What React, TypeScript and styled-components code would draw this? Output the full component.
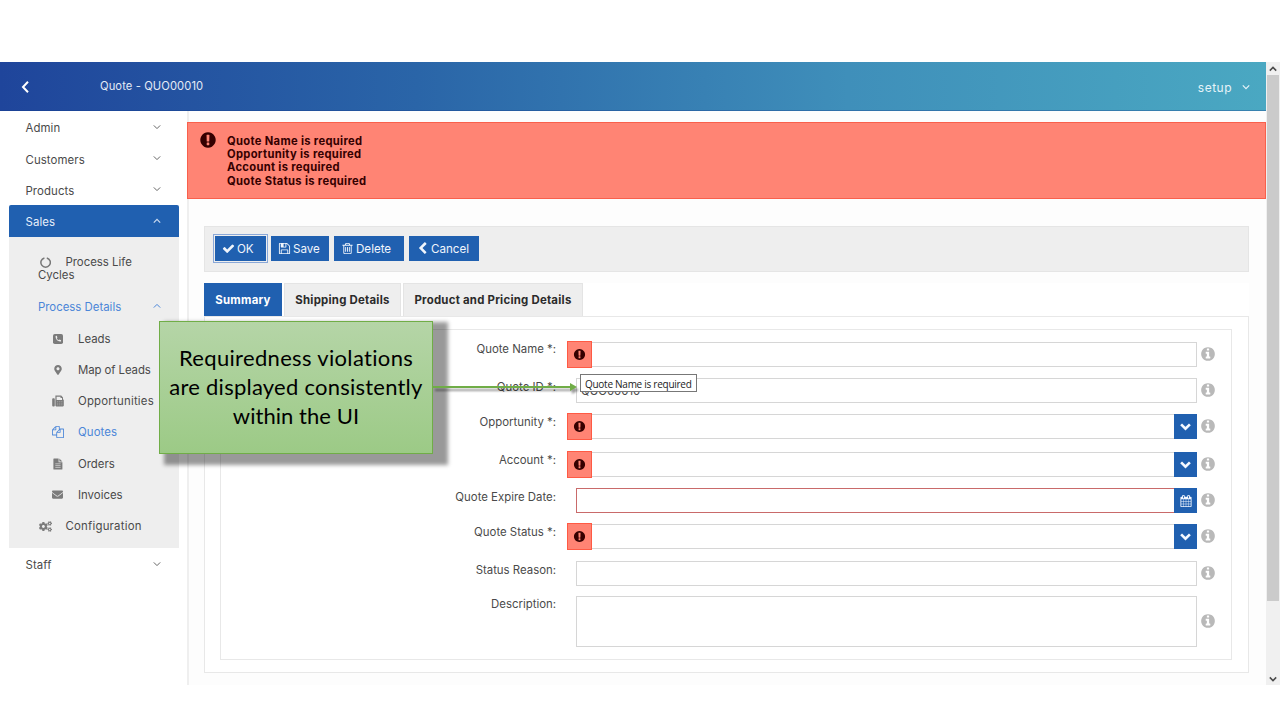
import React from "react";
import styled, { createGlobalStyle } from "styled-components";
import { FaMapMarkerAlt, FaEnvelope, FaCogs } from "react-icons/fa";

const Global = createGlobalStyle`
  * { box-sizing: border-box; }
  body { margin: 0; background: #fff; font-family: Inter, "Liberation Sans", sans-serif; font-size: 11.4px; color: #4a4a4a; }
  button { font: inherit; border: 0; margin: 0; padding: 0; }
  svg { display: block; flex: none; }
`;

const paths = {
  save: "M512 1536h768v-384h-768v384zm896 0h128v-896q0-14-10-38.5t-20-34.5l-281-281q-10-10-34-20t-39-10v416q0 40-28 68t-68 28h-576q-40 0-68-28t-28-68v-416h-128v1280h128v-416q0-40 28-68t68-28h832q40 0 68 28t28 68v416zm-384-928v-320q0-13-9.5-22.5t-22.5-9.5h-192q-13 0-22.5 9.5t-9.5 22.5v320q0 13 9.5 22.5t22.5 9.5h192q13 0 22.5-9.5t9.5-22.5zm640 32v928q0 40-28 68t-68 28h-1344q-40 0-68-28t-28-68v-1344q0-40 28-68t68-28h928q40 0 88 20t76 48l280 280q28 28 48 76t20 88z",
  trash: "M704 736v576q0 14-9 23t-23 9h-64q-14 0-23-9t-9-23v-576q0-14 9-23t23-9h64q14 0 23 9t9 23zm256 0v576q0 14-9 23t-23 9h-64q-14 0-23-9t-9-23v-576q0-14 9-23t23-9h64q14 0 23 9t9 23zm256 0v576q0 14-9 23t-23 9h-64q-14 0-23-9t-9-23v-576q0-14 9-23t23-9h64q14 0 23 9t9 23zm128 724v-948h-896v948q0 22 7 40.5t14.5 27 10.5 8.5h832q3 0 10.5-8.5t14.5-27 7-40.5zm-672-1076h448l-48-117q-7-9-17-11h-317q-10 2-17 11zm928 32v64q0 14-9 23t-23 9h-96v948q0 83-47 143.5t-113 60.5h-832q-66 0-113-58.5t-47-141.5v-952h-96q-14 0-23-9t-9-23v-64q0-14 9-23t23-9h309l70-167q15-37 54-63t79-26h320q40 0 79 26t54 63l70 167h309q14 0 23 9t9 23z",
  check: "M1671 566q0 40-28 68l-724 724-136 136q-28 28-68 28t-68-28l-136-136-362-362q-28-28-28-68t28-68l136-136q28-28 68-28t68 28l294 295 656-657q28-28 68-28t68 28l136 136q28 28 28 68z",
  left: "M1427 301l-531 531 531 531q19 19 19 45t-19 45l-166 166q-19 19-45 19t-45-19l-742-742q-19-19-19-45t19-45l742-742q19-19 45-19t45 19l166 166q19 19 19 45t-19 45z",
  alert: "M896 128q209 0 385.5 103t279.5 279.5 103 385.5-103 385.5-279.5 279.5-385.5 103-385.5-103-279.5-279.5-103-385.5 103-385.5 279.5-279.5 385.5-103zm128 1247v-190q0-14-9-23.500t-22-9.500h-192q-13 0-23 10t-10 23v190q0 13 10 23t23 10h192q13 0 22-9.500t9-23.500zm-2-344l18-621q0-12-10-18-10-8-24-8h-220q-14 0-24 8-10 6-10 18l17 621q0 10 10 17.500t24 7.500h185q14 0 23.500-7.500t10.500-17.500z",
  info: "M1152 1376v-160q0-14-9-23t-23-9h-96v-512q0-14-9-23t-23-9h-320q-14 0-23 9t-9 23v160q0 14 9 23t23 9h96v320h-96q-14 0-23 9t-9 23v160q0 14 9 23t23 9h448q14 0 23-9t9-23zm-128-896v-160q0-14-9-23t-23-9h-192q-14 0-23 9t-9 23v160q0 14 9 23t23 9h192q14 0 23-9t9-23zm640 416q0 209-103 385.5t-279.5 279.5-385.5 103-385.5-103-279.5-279.5-103-385.5 103-385.5 279.5-279.5 385.5-103 385.5 103 279.5 279.5 103 385.5z",
  copy: "M1696 384q40 0 68 28t28 68v1216q0 40-28 68t-68 28h-960q-40 0-68-28t-28-68v-288h-544q-40 0-68-28t-28-68v-672q0-40 20-88t48-76l408-408q28-28 76-48t88-20h416q40 0 68 28t28 68v328q68-40 128-40h416zm-544 213l-299 299h299v-299zm-640-384l-299 299h299v-299zm196 647l316-316v-416h-384v416q0 40-28 68t-68 28h-416v640h512v-256q0-40 20-88t48-76zm956 804v-1152h-384v416q0 40-28 68t-68 28h-416v640h896z",
  calendar: "M192 1664h288v-288h-288v288zm352 0h320v-288h-320v288zm-352-352h288v-320h-288v320zm352 0h320v-320h-320v320zm-352-384h288v-288h-288v288zm736 736h320v-288h-320v288zm-384-736h320v-288h-320v288zm768 736h288v-288h-288v288zm-384-352h320v-320h-320v320zm-352-864v-288q0-13-9.5-22.5t-22.5-9.5h-64q-13 0-22.5 9.5t-9.5 22.5v288q0 13 9.5 22.5t22.5 9.5h64q13 0 22.5-9.5t9.5-22.5zm736 864h288v-320h-288v320zm-384-384h320v-288h-320v288zm384 0h288v-288h-288v288zm32-480v-288q0-13-9.5-22.5t-22.5-9.5h-64q-13 0-22.5 9.5t-9.5 22.5v288q0 13 9.5 22.5t22.5 9.5h64q13 0 22.5-9.5t9.5-22.5zm384-64v1280q0 52-38 90t-90 38h-1408q-52 0-90-38t-38-90v-1280q0-52 38-90t90-38h128v-96q0-66 47-113t113-47h64q66 0 113 47t47 113v96h384v-96q0-66 47-113t113-47h64q66 0 113 47t47 113v96h128q52 0 90 38t38 90z",
};

const Glyph = ({ name, size }: { name: keyof typeof paths; size: number }) => (
  <svg width={size} height={size} viewBox="0 0 1792 1792" fill="currentColor"><path d={paths[name]} /></svg>
);

const Chevron = ({ up = false, size = 8, weight = 1 }: { up?: boolean; size?: number; weight?: number }) => (
  <svg width={size} height={size} viewBox="0 0 8 8" fill="none" stroke="currentColor" strokeWidth={weight}>
    <path d={up ? "M0.8 5.6 L4 2.4 L7.2 5.6" : "M0.8 2.4 L4 5.6 L7.2 2.4"} />
  </svg>
);

const Back = () => (
  <svg width="14" height="14" viewBox="0 0 14 14" fill="none" stroke="currentColor" strokeWidth="2">
    <path d="M10 1.8 L5 7 L10 12.2" />
  </svg>
);

const Notch = () => (
  <svg width="11" height="11" viewBox="0 0 11 11" fill="none" stroke="#777" strokeWidth="1.5">
    <path d="M4.4 0.9 A4.7 4.7 0 1 0 6.8 0.9" />
  </svg>
);

const Phone = () => (
  <svg width="10" height="10" viewBox="0 0 10 10">
    <rect width="10" height="10" rx="1.8" fill="currentColor" />
    <path d="M2.6 2.1 C2.3 5.2 4.9 7.9 7.9 7.4 L8.1 6.2 L6.5 5.5 L5.8 6.2 Q4.3 5.5 3.8 4.2 L4.4 3.5 L3.8 1.8 Z" fill="#eee" />
  </svg>
);

const Fax = () => (
  <svg width="12" height="12" viewBox="0 0 12 12" fill="currentColor">
    <rect x="0.2" y="3.2" width="2.6" height="8.3" rx="0.9" />
    <path fillRule="evenodd" d="M3.4 0.6 H9.2 L11 2.4 V4.3 L11.8 5 V10.7 L11 11.5 H4.2 L3.4 10.7 Z M4.6 1.7 V5 H10 V3.1 H8.5 V1.7 Z" />
    <path d="M5 6.6h5.4M5 8.2h5.4M5 9.8h5.4" stroke="#a5a5a5" strokeWidth="0.8" strokeDasharray="1.2 0.9" />
  </svg>
);

const FileText = () => (
  <svg width="10" height="12" viewBox="0 0 10 12" fill="currentColor">
    <path d="M0.9 0.5 H5.6 V4.2 H9.4 V10.9 Q9.4 11.5 8.8 11.5 H0.9 Q0.4 11.5 0.4 10.9 V1.1 Q0.4 0.5 0.9 0.5 Z" />
    <path d="M6.4 0.6 L9.3 3.5 H6.4 Z" />
    <path d="M2.3 5.8h5.3M2.3 7.6h5.3M2.3 9.4h5.3" stroke="#d0d0d0" strokeWidth="0.8" />
  </svg>
);

const Page = styled.div`
  position: relative;
  width: 1280px;
  height: 720px;
  padding-top: 62px;
  overflow: hidden;
  background: #fff;
`;
const Window = styled.div`
  display: flex;
  height: 623px;
`;
const AppArea = styled.div`
  width: 1266px;
  display: flex;
  flex-direction: column;
`;
const Header = styled.header`
  height: 49px;
  flex: none;
  display: flex;
  align-items: center;
  background: linear-gradient(90deg, #1f459b 0%, #2a65a8 33%, #3f8fba 67%, #4aa8c2 100%);
  border-bottom: 1px solid rgba(20, 60, 140, 0.35);
  color: #fff;
  padding: 2px 16px 0 18px;
`;
const Title = styled.div`
  margin-left: 68px;
  padding-bottom: 3px;
  font-size: 11.2px;
  letter-spacing: 0.1px;
  color: #e4ebf6;
`;
const User = styled.div`
  margin-left: auto;
  display: flex;
  align-items: center;
  gap: 10px;
  font-size: 12px;
  letter-spacing: 0.5px;
  color: #e6f3f8;
`;
const Body = styled.div`
  flex: 1;
  min-height: 0;
  display: flex;
`;
const Sidebar = styled.nav`
  width: 187px;
  flex: none;
  padding: 0 8px 0 9px;
`;
const Section = styled.div<{ $active?: boolean }>`
  height: 31.4px;
  display: flex;
  align-items: center;
  justify-content: space-between;
  padding: 3px 18px 0 16.5px;
  letter-spacing: 0.1px;
  border-radius: 2px 2px 0 0;
  background: ${(p) => (p.$active ? "#2060b0" : "transparent")};
  color: ${(p) => (p.$active ? "#e8effa" : "#4a4a4a")};
  svg { margin-bottom: 3px; opacity: 0.85; }
`;
const SubMenu = styled.div`
  height: 311.5px;
  background: #eee;
  padding-top: 19px;
  margin-bottom: 0;
`;
const Cycles = styled.div`
  height: 36px;
  padding-left: 29px;
  line-height: 13.5px;
`;
const CyclesFirst = styled.div`
  display: flex;
  align-items: center;
  gap: 14.5px;
  padding-left: 2px;
`;
const SubHead = styled.div`
  height: 31.3px;
  display: flex;
  align-items: center;
  justify-content: space-between;
  padding: 0 18px 0 29px;
  color: #4b86d8;
  svg { margin-bottom: 3px; }
`;
const SubItem = styled.div<{ $level?: number; $on?: boolean; $track?: number }>`
  height: 31.3px;
  display: flex;
  align-items: center;
  white-space: nowrap;
  letter-spacing: ${(p) => p.$track ?? 0}px;
  padding-left: ${(p) => (p.$level === 1 ? 29.5 : 42)}px;
  color: ${(p) => (p.$on ? "#4b86d8" : "#4a4a4a")};
`;
const ItemIcon = styled.span<{ $on?: boolean }>`
  width: 13px;
  margin-right: 14px;
  display: flex;
  justify-content: center;
  color: ${(p) => (p.$on ? "#4b86d8" : "#7b7b7b")};
`;
const Content = styled.main`
  flex: 1;
  min-width: 0;
  background: #fdfdfd;
  border-left: 2px solid #efefef;
`;
const Alert = styled.div`
  margin: 11px 0 0 -2px;
  height: 77px;
  display: flex;
  background: #ff8474;
  border: 1px solid #f9604c;
  padding: 8px 11px;
  color: #350000;
`;
const AlertList = styled.div`
  margin: 3.5px 0 0 10px;
  font-size: 11.2px;
  letter-spacing: 0.32px;
  font-weight: 700;
  line-height: 13.4px;
`;
const Toolbar = styled.div`
  margin: 27px 17px 0 15px;
  height: 46px;
  display: flex;
  gap: 5px;
  padding: 9px 0 0 10px;
  background: #eee;
  border: 1px solid #e5e5e5;
`;
const Action = styled.button<{ $w: number; $focus?: boolean }>`
  width: ${(p) => p.$w}px;
  height: 25px;
  display: flex;
  align-items: center;
  gap: 2px;
  padding-left: 7px;
  color: #f0f5fc;
  background: #2060b0;
  outline: ${(p) => (p.$focus ? "1px solid #8aa8d8" : "none")};
  outline-offset: 1px;
  font-size: 11.6px;
`;
const Tabs = styled.div`
  display: flex;
  gap: 2px;
  margin: 11px 17px 0 15px;
  background: #fff;
`;
const Tab = styled.div<{ $w: number; $on?: boolean }>`
  width: ${(p) => p.$w}px;
  height: 33px;
  display: flex;
  align-items: center;
  justify-content: center;
  font-weight: 700;
  font-size: 11.4px;
  letter-spacing: 0.24px;
  color: ${(p) => (p.$on ? "#fff" : "#2b2b2b")};
  background: ${(p) => (p.$on ? "#2060b0" : "#eee")};
  border: 1px solid ${(p) => (p.$on ? "#2060b0" : "#e4e4e4")};
  border-bottom: 0;
`;
const Panel = styled.section`
  margin: 0 17px 0 15px;
  height: 357px;
  padding: 12px 16px 12px 15px;
  background: #fff;
  border: 1px solid #e8e8e8;
`;
const Fieldset = styled.div`
  height: 331px;
  padding-top: 12px;
  border: 1px solid #e8e8e8;
`;
const Row = styled.div<{ $h: number }>`
  height: ${(p) => p.$h}px;
  display: flex;
  align-items: flex-start;
`;
const Label = styled.label<{ $drop: number }>`
  width: 335px;
  margin-right: 20px;
  padding-top: ${(p) => p.$drop}px;
  line-height: 14px;
  text-align: right;
`;
const Control = styled.div<{ $h: number; $invalid?: boolean }>`
  position: relative;
  width: 621px;
  height: ${(p) => p.$h}px;
  display: flex;
  align-items: center;
  justify-content: space-between;
  padding-left: 4px;
  background: #fff;
  border: 1px solid ${(p) => (p.$invalid ? "#c96a6a" : "#d6d6d6")};
`;
const Picker = styled.button`
  width: 23px;
  height: 25px;
  margin: -1px -1px -1px auto;
  display: flex;
  align-items: center;
  justify-content: center;
  background: #2060b0;
  color: #f4f8ff;
`;
const ErrorBadge = styled.span`
  position: absolute;
  left: -10px;
  top: -2px;
  width: 25px;
  height: 27px;
  display: flex;
  align-items: center;
  justify-content: center;
  padding-bottom: 1px;
  background: #ff8474;
  border: 1px solid #ff5a44;
  color: #350000;
`;
const Help = styled.span<{ $h: number }>`
  height: ${(p) => p.$h}px;
  margin-left: 3px;
  display: flex;
  align-items: center;
  color: #b9b9b9;
`;
const Scrollbar = styled.div`
  width: 14px;
  display: flex;
  flex-direction: column;
  background: #f0f0f0;
  color: #4a4a4a;
`;
const ScrollEnd = styled.div`
  height: 13px;
  flex: none;
  display: flex;
  align-items: center;
  justify-content: center;
`;
const Track = styled.div`
  flex: 1;
  padding: 0 0 0 1px;
`;
const Thumb = styled.div`
  width: 12px;
  height: 526px;
  background: #cbcbcb;
`;
const Tooltip = styled.div`
  position: absolute;
  left: 580px;
  top: 374px;
  width: 117px;
  height: 18px;
  padding-left: 4px;
  font: 10px/18px "Open Sans", sans-serif;
  letter-spacing: -0.27px;
  white-space: nowrap;
  color: #222;
  background: #fff;
  border: 1px solid #777;
`;
const Callout = styled.div`
  position: absolute;
  left: 159px;
  top: 321px;
  width: 274px;
  height: 133px;
  padding-top: 21px;
  text-align: center;
  white-space: nowrap;
  font: 22px/29px Lato, sans-serif;
  color: #000;
  background: linear-gradient(#b5d5a7, #9cca86);
  border: 1px solid #70ad47;
  box-shadow: 10px 6px 4px 5px rgba(0, 0, 0, 0.4);
`;
const CalloutLine = styled.div<{ $track: number }>`
  letter-spacing: ${(p) => p.$track}px;
`;
const Arrow = styled.svg`
  position: absolute;
  left: 433px;
  top: 378px;
  filter: drop-shadow(2px 3px 1px rgba(0, 0, 0, 0.4));
`;

type FieldSpec = { label: string; h: number; drop: number; box?: number; error?: boolean; kind?: "select" | "date"; value?: string };
const fields: FieldSpec[] = [
  { label: "Quote Name *:", h: 36, drop: 0, error: true },
  { label: "Quote ID *:", h: 36, drop: 2, value: "QUO00010" },
  { label: "Opportunity *:", h: 38, drop: 1, error: true, kind: "select" },
  { label: "Account *:", h: 36, drop: 1, error: true, kind: "select" },
  { label: "Quote Expire Date:", h: 36, drop: 2, kind: "date" },
  { label: "Quote Status *:", h: 37, drop: 1, error: true, kind: "select" },
  { label: "Status Reason:", h: 35, drop: 2 },
  { label: "Description:", h: 51, drop: 1, box: 51 },
];

const Field = ({ label, h, drop, box = 25, error, kind, value }: FieldSpec) => (
  <Row $h={h}>
    <Label $drop={drop}>{label}</Label>
    <Control $h={box} $invalid={kind === "date"}>
      {value}
      {error && <ErrorBadge><Glyph name="alert" size={13} /></ErrorBadge>}
      {kind && <Picker>{kind === "date" ? <Glyph name="calendar" size={12} /> : <Chevron size={11} weight={1.9} />}</Picker>}
    </Control>
    <Help $h={box - 2}><Glyph name="info" size={16} /></Help>
  </Row>
);

const details = [
  { label: "Leads", icon: <Phone /> },
  { label: "Map of Leads", icon: <FaMapMarkerAlt size={10} />, track: -0.08 },
  { label: "Opportunities", icon: <Fax />, track: 0.22 },
  { label: "Quotes", icon: <Glyph name="copy" size={12} />, on: true, track: 0.1 },
  { label: "Orders", icon: <FileText /> },
  { label: "Invoices", icon: <FaEnvelope size={11} /> },
];

export default function App() {
  return (
    <Page>
      <Global />
      <Window>
        <AppArea>
          <Header>
            <Back />
            <Title>Quote - QUO00010</Title>
            <User>setup <Chevron size={8} weight={1.2} /></User>
          </Header>
          <Body>
            <Sidebar>
              {["Admin", "Customers", "Products"].map((name) => (
                <Section key={name}>{name}<Chevron /></Section>
              ))}
              <Section $active>Sales<Chevron up weight={1.2} /></Section>
              <SubMenu>
                <Cycles>
                  <CyclesFirst><Notch />Process Life</CyclesFirst>
                  Cycles
                </Cycles>
                <SubHead>Process Details<Chevron up /></SubHead>
                {details.map((d) => (
                  <SubItem key={d.label} $on={d.on} $track={d.track}><ItemIcon $on={d.on}>{d.icon}</ItemIcon>{d.label}</SubItem>
                ))}
                <SubItem $level={1} $track={0.22}><ItemIcon><FaCogs size={13} /></ItemIcon>Configuration</SubItem>
              </SubMenu>
              <Section>Staff<Chevron /></Section>
            </Sidebar>
            <Content>
              <Alert>
                <Glyph name="alert" size={18} />
                <AlertList>
                  <div>Quote Name is required</div>
                  <div>Opportunity is required</div>
                  <div>Account is required</div>
                  <div>Quote Status is required</div>
                </AlertList>
              </Alert>
              <Toolbar>
                <Action $w={51} $focus><Glyph name="check" size={13} />OK</Action>
                <Action $w={58}><Glyph name="save" size={13} />Save</Action>
                <Action $w={70}><Glyph name="trash" size={13} />Delete</Action>
                <Action $w={70}><Glyph name="left" size={13} />Cancel</Action>
              </Toolbar>
              <Tabs>
                <Tab $w={78} $on>Summary</Tab>
                <Tab $w={117}>Shipping Details</Tab>
                <Tab $w={180}>Product and Pricing Details</Tab>
              </Tabs>
              <Panel>
                <Fieldset>
                  {fields.map((f) => <Field key={f.label} {...f} />)}
                </Fieldset>
              </Panel>
            </Content>
          </Body>
        </AppArea>
        <Scrollbar>
          <ScrollEnd><Chevron up weight={1.5} /></ScrollEnd>
          <Track><Thumb /></Track>
          <ScrollEnd><Chevron weight={1.5} /></ScrollEnd>
        </Scrollbar>
      </Window>
      <Tooltip>Quote Name is required</Tooltip>
      <Callout>
        <CalloutLine $track={0.33}>Requiredness violations</CalloutLine>
        <CalloutLine $track={0.24}>are displayed consistently</CalloutLine>
        <CalloutLine $track={0.05}>within the UI</CalloutLine>
      </Callout>
      <Arrow width="146" height="18" viewBox="0 0 146 18">
        <path d="M0 9H138" stroke="#70ad47" strokeWidth="2" />
        <path d="M137 5L144 9L137 13Z" fill="#70ad47" />
      </Arrow>
    </Page>
  );
}
